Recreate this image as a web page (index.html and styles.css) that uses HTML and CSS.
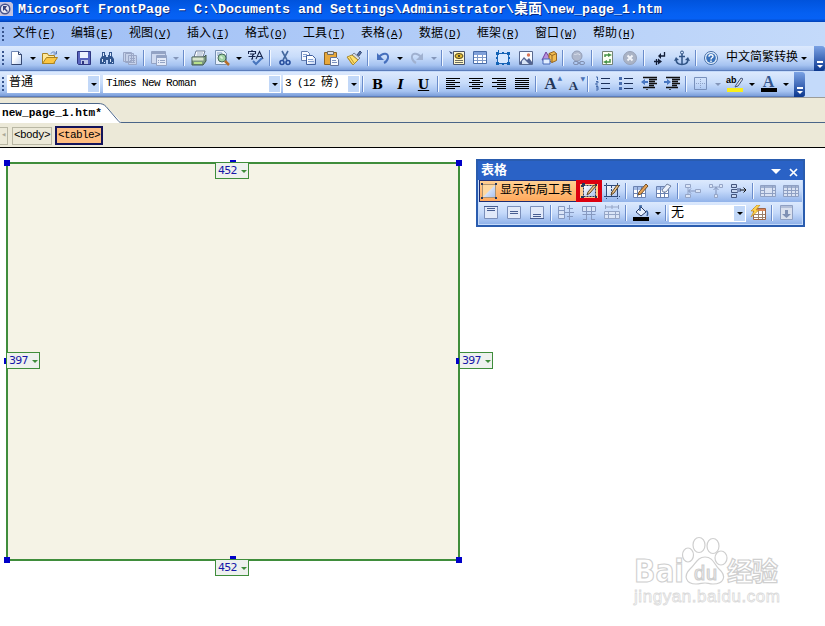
FILE: index.html
```html
<!DOCTYPE html>
<html lang="zh-CN">
<head>
    <meta charset="UTF-8">
    <title>Microsoft FrontPage</title>
    <link rel="stylesheet" href="styles.css">
</head>
<body>
    <svg class="sprite">
        <defs>
            <linearGradient id="paper" x2="1" y2="1"><stop offset=".4" stop-color="#fff"/><stop offset="1" stop-color="#b9cdf0"/></linearGradient>
            <linearGradient id="cell" y2="1" x2="1"><stop offset="0" stop-color="#fff"/><stop offset="1" stop-color="#a9c2ee"/></linearGradient>
        </defs>
        <symbol id="new" viewBox="0 0 16 16"><path d="M3.5 1.5h7l3 3v10h-10z" fill="url(#paper)" stroke="#7288b5"/><path d="M10.500 1.500v3h3M13.500 4.500v10h-10" fill="none" stroke="#34466f"/></symbol>
        <symbol id="open" viewBox="0 0 16 16"><path d="M.5 13.500v-10h5l1 2h6v8z" fill="#ffe89a" stroke="#a98222"/><path d="M.5 13.500l4-6h11l-4 6z" fill="#fbc643" stroke="#a98222"/><path d="M9 3.500c1-2 4-2 5 0M14.500 1v3h-3" fill="none" stroke="#5e7fb8"/></symbol>
        <symbol id="save" viewBox="0 0 16 16"><path d="M1.500 1.500h13v13h-12l-1-1z" fill="#5964bd" stroke="#2e3580"/><path d="M4 2h8v6H4z" fill="#eef3ff"/><path d="M5 10h7v4H5z" fill="#bcc6e8"/><path d="M6 11h2v3H6z" fill="#2e3580"/></symbol>
        <symbol id="find" viewBox="0 0 16 16"><path d="M3 2h3v3h1v2h2V5h1V2h3v4l2 3v5H9v-4H7v4H1V9l2-3z" fill="#31568f"/><path d="M4 3h1v3H4zM11 3h1v3h-1zM3 9h1v3H3zM11 9h1v3h-1zM5 12h1v1H5zM13 12h1v1h-1z" fill="#dce8fb"/></symbol>
        <symbol id="copies" viewBox="0 0 16 16"><path d="M1.500 2.500h8v9h-8zM3.500 3.500h8v9h-8zM6.500 5.500h8v9h-8z" fill="#c6d2ea" stroke="#9aa7c6"/><path d="M8 8.500h5M8 10.500h5M8 12.500h5" stroke="#9aa7c6"/></symbol>
        <symbol id="pane" viewBox="0 0 16 16"><path d="M.5 1.500h14v12H.5z" fill="#cfdaf0" stroke="#93a3c4"/><path d="M1 2h13v2H1z" fill="#93a3c4"/><path d="M5.500 5.500h10v10h-10z" fill="#e3eaf8" stroke="#93a3c4"/><path d="M6 6h9v2H6zM7 10h1v1H7zM7 12h1v1H7zM9 10h5v1H9zM9 12h5v1H9z" fill="#93a3c4"/></symbol>
        <symbol id="print" viewBox="0 0 16 16"><path d="M5 1h9l-2 6H3z" fill="#fff" stroke="#6d7d98"/><path d="M6 3h6M5.500 5h6" stroke="#95a9c7"/><path d="M1 7h12l2-2v6l-3 4H1z" fill="#7d9981" stroke="#42594a"/><path d="M1.500 7.500h11v3h-11z" fill="#dbe6cf"/><path d="M3 12h8v2H3z" fill="#b8e08b"/></symbol>
        <symbol id="preview" viewBox="0 0 16 16"><path d="M1.500.5h8l3 3v11h-11z" fill="#e8f1fb" stroke="#7892b4"/><path d="M3 3h5M3 5h4" stroke="#84a0c6"/><circle cx="8" cy="8" r="4" fill="#9fd2a5" stroke="#466858"/><path d="M6 7h2v2" fill="none" stroke="#efffed"/><path d="M11 11l4 4" stroke="#b66d27" stroke-width="2.500"/></symbol>
        <symbol id="spell" viewBox="0 0 16 16"><path d="M4 0v1.500M.5 4V1.500h7V4M2 4h4L4.500 5.500V9H3M.5 6.500h7M8 9L11.500 1.500 15 9M9 6.500h5" fill="none" stroke="#17254c" stroke-width="1.100"/><path d="M5 11l3 3 6-6" fill="none" stroke="#4775bd" stroke-width="2"/></symbol>
        <symbol id="cut" viewBox="0 0 16 16"><path d="M5 1l5 9M11 1L6 10" stroke="#45699f" stroke-width="1.600"/><circle cx="5" cy="12.500" r="2" fill="none" stroke="#284f9e" stroke-width="1.600"/><circle cx="11" cy="12.500" r="2" fill="none" stroke="#284f9e" stroke-width="1.600"/></symbol>
        <symbol id="copy" viewBox="0 0 16 16"><path d="M1.500 1.500h6l2 2v7h-8z" fill="#f7faff" stroke="#647eb0"/><path d="M6.500 5.500h6l3 3v6h-9z" fill="url(#paper)" stroke="#405f9e"/><path d="M3 4.500h4M3 6.500h3M8 9.500h5M8 11.500h6" stroke="#84a0d0"/></symbol>
        <symbol id="paste" viewBox="0 0 16 16"><path d="M1.500 2.500h12v12h-12z" fill="#e8a83b" stroke="#8b6428"/><path d="M4.500 1.500h6v3h-6z" fill="#d9dde6" stroke="#6d6c69"/><path d="M7.500 7.500h6l2 2v6h-8z" fill="#f7faff" stroke="#60739d"/><path d="M9 10.500h4M9 12.500h5" stroke="#7b91bf"/></symbol>
        <symbol id="brush" viewBox="0 0 16 16"><path d="M11 5l3-4 1.500 1.500L12 7z" fill="#5670a7" stroke="#34466f"/><path d="M8 3l6 5-2 2-6-5z" fill="#d5dbe4" stroke="#7b8495"/><path d="M6 5l6 5-5 5L1 7z" fill="#ffe06a" stroke="#a98931"/><path d="M4 7l4 6M2 8l4 6" stroke="#b99330"/></symbol>
        <symbol id="undo" viewBox="0 0 16 16"><path d="M4 7c4-5 10-4 9 1-.4 2-2 4-4 5" fill="none" stroke="#456fbd" stroke-width="2"/><path d="M2 3v7h7z" fill="#456fbd"/></symbol>
        <symbol id="redo" viewBox="0 0 16 16"><path d="M12 7C8 2 2 3 3 8c.4 2 2 4 4 5" fill="none" stroke="#a0b1d0" stroke-width="2"/><path d="M14 3v7H7z" fill="#a0b1d0"/></symbol>
        <symbol id="component" viewBox="0 0 16 16"><path d="M4.500 1.500h11v13h-11z" fill="#fff6c7" stroke="#48536c"/><path d="M6 10.500h8M6 12.500h8" stroke="#6c6d61"/><ellipse cx="10" cy="6" rx="4" ry="2.500" fill="#e4bd35" stroke="#554716"/><circle cx="10" cy="6" r="1" fill="#222"/><path d="M0 1l4 2-2 1z" fill="#263a6d"/></symbol>
        <symbol id="table" viewBox="0 0 16 16"><path d="M1.500 1.500h13v12h-13z" fill="#fff" stroke="#486ca8"/><path d="M2 2h12v3H2z" fill="#7fa0d9"/><path d="M2 7.500h12M2 10.500h12M5.500 5v8M10.500 5v8" stroke="#7f9ac8"/></symbol>
        <symbol id="layer" viewBox="0 0 16 16"><path d="M2.500 3.500h11v10h-11z" fill="#d7e8ff" stroke="#1f64b5"/><path d="M1 2h3v3H1zM12 2h3v3h-3zM1 12h3v3H1zM12 12h3v3h-3zM7 2h2v2H7zM7 13h2v2H7zM1 7h2v2H1zM13 7h2v2h-2zM3 0h1v3H3z" fill="#1263b6"/></symbol>
        <symbol id="image" viewBox="0 0 16 16"><path d="M1.500 1.500h13v13h-13z" fill="#f8fbff" stroke="#58698f"/><path d="M2 12l4-5 3 3 2-2 3 4v2H2z" fill="#526391"/><path d="M4 11l2-2 5 5H4z" fill="#d8e4f5"/><circle cx="10.500" cy="5" r="1.700" fill="#db7656"/></symbol>
        <symbol id="draw" viewBox="0 0 16 16"><path d="M5 2l5 8H1z" fill="#b88fdb" stroke="#7044a0"/><path d="M8 3.500l5-2 2.500 2v7l-4.500 2-3-2z" fill="#f3bd4f" stroke="#956521"/><path d="M2 9h7v5H2z" fill="#e2eeff" stroke="#4467b6"/><path d="M8 3.500l3 2 4.500-2M11 5.500v7" stroke="#956521" fill="none"/></symbol>
        <symbol id="link" viewBox="0 0 16 16"><circle cx="7" cy="6" r="5" fill="#b0b9cd" stroke="#929db6"/><path d="M4 4c2 2 3-2 6 1" stroke="#dce2ee" fill="none"/><rect x="3.500" y="11.500" width="5" height="3" rx="1.500" fill="none" stroke="#8190b1"/><rect x="9.500" y="11.500" width="5" height="3" rx="1.500" fill="none" stroke="#8190b1"/><path d="M7 13h4" stroke="#8190b1"/></symbol>
        <symbol id="refresh" viewBox="0 0 16 16"><path d="M3.500 1.500h10v13h-10z" fill="#fbfff2" stroke="#748276"/><path d="M6 7V5h5M11 9v3H6" fill="none" stroke="#469447" stroke-width="1.500"/><path d="M9 3l4 2-4 2zM8 10l-4 2 4 2z" fill="#469447"/></symbol>
        <symbol id="stop" viewBox="0 0 16 16"><circle cx="8" cy="8" r="6.500" fill="#aab3c5" stroke="#98a2b8"/><path d="M5.500 5.500l5 5M10.500 5.500l-5 5" stroke="#f1f4f9" stroke-width="2"/></symbol>
        <symbol id="marks" viewBox="0 0 16 16"><path d="M13.500 2v4H9M3 11.500h5M5.500 9v6" fill="none" stroke="#111c36" stroke-width="1.300"/><path d="M10 3v6L7 6zM7 8.500v6l4-3z" fill="#111c36"/></symbol>
        <symbol id="anchor" viewBox="0 0 16 16"><circle cx="8" cy="2.500" r="1.500" fill="none" stroke="#315486"/><path d="M8 4v10M5 6.500h6M2 9c0 4 3 5.500 6 5.500s6-1.500 6-5.500" fill="none" stroke="#315486" stroke-width="1.500"/><path d="M0 11l2-4 3 3zM16 11l-2-4-3 3z" fill="#315486"/></symbol>
        <symbol id="help" viewBox="0 0 16 16"><circle cx="8" cy="8" r="6.500" fill="#e9f3ff" stroke="#456da5"/><circle cx="8" cy="8" r="4.800" fill="#3972bb"/><path d="M6 6.700c0-2.600 4-2.600 4-.3 0 1.500-2 1.300-2 3M8 10.500V12" fill="none" stroke="#fff" stroke-width="1.400"/></symbol>
        <symbol id="left" viewBox="0 0 16 16"><path d="M1 2.500h14M1 4.500h9M1 6.500h14M1 8.500h9M1 10.500h14M1 12.500h9" stroke="#000"/></symbol>
        <symbol id="center" viewBox="0 0 16 16"><path d="M1 2.500h14M4 4.500h8M1 6.500h14M4 8.500h8M1 10.500h14M4 12.500h8" stroke="#000"/></symbol>
        <symbol id="right" viewBox="0 0 16 16"><path d="M1 2.500h14M6 4.500h9M1 6.500h14M6 8.500h9M1 10.500h14M6 12.500h9" stroke="#000"/></symbol>
        <symbol id="justify" viewBox="0 0 16 16"><path d="M1 2.500h14M1 4.500h14M1 6.500h14M1 8.500h14M1 10.500h14M1 12.500h14" stroke="#000"/></symbol>
        <symbol id="numbers" viewBox="0 0 16 16"><path d="M6 2.500h9M6 7.500h9M6 12.500h9" stroke="#1b2f58"/><path d="M1 1h1.500v3M1 5.500h2v1.500H1v2h2M1 10.500h2v3.500H1M1 12h2" fill="none" stroke="#456bab"/></symbol>
        <symbol id="bullets" viewBox="0 0 16 16"><path d="M6 2.500h9M6 7.500h9M6 12.500h9" stroke="#1b2f58"/><path d="M1 1h3v3H1zM1 6h3v3H1zM1 11h3v3H1z" fill="#486daf"/></symbol>
        <symbol id="outdent" viewBox="0 0 16 16"><path d="M2 1.500h14M8 3.500h8M8 5.500h6M8 7.500h8M8 9.500h5M2 11.500h12M6 13v1" stroke="#111" stroke-width="1.300"/><path d="M0 6l4-3v2h3v2H4v2z" fill="#4776c1"/></symbol>
        <symbol id="indent" viewBox="0 0 16 16"><path d="M2 1.500h14M8 3.500h8M8 5.500h6M8 7.500h8M8 9.500h5M2 11.500h12M6 13v1" stroke="#111" stroke-width="1.300"/><path d="M7 6L3 3v2H0v2h3v2z" fill="#4776c1"/></symbol>
        <symbol id="border" viewBox="0 0 16 16"><path d="M1.500 1.500h12v12h-12z" fill="none" stroke="#7890bb"/><path d="M7.500 3v10M3 7.500h10" stroke="#8da1c6" stroke-dasharray="1 1"/></symbol>
        <symbol id="marker" viewBox="0 0 16 16"><path d="M0 12h16v4H0z" fill="#f9ef1b"/><path d="M9 9l5-7 2 1-5 7-3 1z" fill="#d8dde5" stroke="#44557c"/></symbol>
        <symbol id="mini" viewBox="0 0 16 16"><path d="M1 1h14v14H1z" fill="#ffd9a0"/><path d="M2 14L14 2v12z" fill="url(#cell)"/><path d="M1.500 1.500h13v13h-13z" fill="none" stroke="#5a4c44" stroke-dasharray="1 1"/><path d="M0 0h2v2H0zM14 0h2v2h-2zM0 14h2v2H0zM14 14h2v2h-2z" fill="#26385c"/></symbol>
        <symbol id="drawtable" viewBox="0 0 16 16"><path d="M2.500 2.500h12v11h-12z" fill="url(#cell)" stroke="#26385c" stroke-dasharray="2 1"/><path d="M0 2h3v2H0zM1 0h3v3H1zM0 13h3v2H0zM14 13h2v2h-2zM14 1h2v2h-2z" fill="#26385c"/><path d="M7 9l6-7 2 1-6 7-3 2z" fill="#efc58b" stroke="#604925"/></symbol>
        <symbol id="drawcell" viewBox="0 0 16 16"><path d="M2.500 2.500h11v11h-11z" fill="url(#cell)" stroke="#304b7b"/><path d="M0 2.500h16M0 13.500h16M2.500 0v16M13.500 0v16M7.500 3v10" stroke="#304b7b" stroke-dasharray="2 1"/><path d="M8 9l5-7 2 1-5 7-3 2z" fill="#efc58b" stroke="#604925"/></symbol>
        <symbol id="pencil" viewBox="0 0 16 16"><path d="M.5 3.500h12v11H.5z" fill="#fff" stroke="#6b82b1"/><path d="M1 4h11v3H1z" fill="#a5bde8"/><path d="M1 10.500h11M4.500 4v10M8.500 4v10" stroke="#6b82b1"/><path d="M6 9l7-8 2 2-7 8-3 1z" fill="#e6a258" stroke="#725025"/></symbol>
        <symbol id="eraser" viewBox="0 0 16 16"><path d="M.5 3.500h12v11H.5z" fill="#fff" stroke="#6b82b1"/><path d="M1 4h11v3H1z" fill="#a5bde8"/><path d="M1 10.500h11M4.500 4v10M8.500 4v10" stroke="#6b82b1"/><path d="M6 7l5-6 4 2-5 6H7z" fill="#eaf0fb" stroke="#71809d"/></symbol>
        <symbol id="insrow" viewBox="0 0 16 16"><path d="M.5 1.500h5v3h-5zM.5 11.500h5v3h-5zM10.500 6.500h5v3h-5zM3 4v7" fill="#dbe5f7" stroke="#95a5c6"/><path d="M4 8h6M6 5.500L3.500 8 6 10.500" fill="none" stroke="#8193ba"/></symbol>
        <symbol id="inscol" viewBox="0 0 16 16"><path d="M1.500 1.500h3v3h-3zM11.500 1.500h3v3h-3zM6.500 11.500h3v3h-3zM4 4h7" fill="#dbe5f7" stroke="#95a5c6"/><path d="M8 4v7M5.500 7L8 4.500 10.500 7" fill="none" stroke="#8193ba"/></symbol>
        <symbol id="delcell" viewBox="0 0 16 16"><path d="M.5 1.500h5v3h-5zM.5 6.500h6v3h-6zM.5 11.500h5v3h-5z" fill="#c9d7f0" stroke="#44557d"/><path d="M6 5h4v4H6z" fill="#7e91ba"/><path d="M9 7h6M12.500 4.500L15 7l-2.500 2.500" fill="none" stroke="#111"/></symbol>
        <symbol id="merge" viewBox="0 0 16 16"><path d="M.5 2.500h15v11H.5z" fill="#d9e2f3" stroke="#8fa0c3"/><path d="M1 3h14v2H1z" fill="#9fb0d0"/><path d="M4.500 3v10M12.500 3v10M1 7.500h3M13 7.500h2M1 10.500h14" stroke="#8fa0c3"/></symbol>
        <symbol id="split" viewBox="0 0 16 16"><path d="M.5 2.500h15v11H.5z" fill="#d9e2f3" stroke="#8fa0c3"/><path d="M1 3h14v2H1z" fill="#9fb0d0"/><path d="M4.500 3v10M8.500 3v10M12.500 3v10M1 7.500h14M1 10.500h14" stroke="#8fa0c3"/></symbol>
        <symbol id="top" viewBox="0 0 16 16"><path d="M1.500 1.500h13v12h-13z" fill="#e1e9f9" stroke="#7b8fba"/><path d="M1 1.500h14M4 3.500h8M4 5.500h8" stroke="#475d91"/></symbol>
        <symbol id="middle" viewBox="0 0 16 16"><path d="M1.500 1.500h13v12h-13z" fill="#e1e9f9" stroke="#7b8fba"/><path d="M4 6.500h8M4 8.500h8" stroke="#475d91"/></symbol>
        <symbol id="bottom" viewBox="0 0 16 16"><path d="M1.500 1.500h13v12h-13z" fill="#e1e9f9" stroke="#7b8fba"/><path d="M4 9.500h8M4 11.500h8M1 13.500h14" stroke="#475d91"/></symbol>
        <symbol id="rows" viewBox="0 0 16 16"><path d="M.5 1.500h6v12h-6zM1 5.500h5M1 9.500h5M9 3.500h6M9 11.500h6M11.500 0v15M6 7.500h10" fill="#dbe5f7" stroke="#8699c0"/></symbol>
        <symbol id="cols" viewBox="0 0 16 16"><path d="M1.500 1.500h13v5h-13zM1.500 9.500h13M5.500 1v14M10.500 1v14M2 14.500h3M11 14.500h3" fill="#dbe5f7" stroke="#8699c0"/></symbol>
        <symbol id="autofit" viewBox="0 0 16 16"><path d="M.5 6.500h15v7H.5zM1 9.500h14M4.500 6v7M11.500 6v7M1.500 0v4M8 0v4M14.500 0v4M2 2h12" fill="#dbe5f7" stroke="#95a5c6"/></symbol>
        <symbol id="fill" viewBox="0 0 16 16"><path d="M0 12h16v4H0z" fill="#000"/><path d="M3 7l5-5 5 5-5 4z" fill="#eaf2ff" stroke="#2a3c66"/><path d="M7 6V1h2M13 6c2 0 2 3 1 5" fill="none" stroke="#365f9c" stroke-width="1.500"/></symbol>
        <symbol id="format" viewBox="0 0 16 16"><path d="M3.500 3.500h12v11h-12z" fill="#fff" stroke="#9c6446"/><path d="M4 4h11v2H4z" fill="#dc8559"/><path d="M4 9.500h11M4 12.500h11M8.500 6v8M12.500 6v8" stroke="#9c806e"/><path d="M7 0L1 6h3l-3 6 8-7H6l4-5z" fill="#ffd34e" stroke="#b98217" stroke-width=".6"/></symbol>
        <symbol id="down" viewBox="0 0 16 16"><path d="M1.500.500h12v14h-12z" fill="#d9e0ee" stroke="#8fa0c3"/><path d="M2 1h11v2H2z" fill="#b3bfd8"/><path d="M6 5h3v4h3l-4.500 4L3 9h3z" fill="#7f90b4"/></symbol>
    </svg>

    <div class="title-bar">
        <svg class="app-icon" viewBox="0 0 13 16"><path d="M0 1h11l2 2v12H0z" fill="#c5c4df"/><circle cx="5" cy="8" r="5.500" fill="#47548c"/><circle cx="5" cy="8" r="4" fill="#e9e8f3"/><path d="M3 5v5l1.500-1.500L7 11l1-1-2.500-2.500L7 5z" fill="#35427f"/></svg>
        <span>Microsoft FrontPage – C:\Documents and Settings\Administrator\<b>桌面</b>\new_page_1.htm</span>
    </div>

    <div class="menu-bar">
        <i class="grip"></i>
        <span>文件<em>(<u>F</u>)</em></span>
        <span>编辑<em>(<u>E</u>)</em></span>
        <span>视图<em>(<u>V</u>)</em></span>
        <span>插入<em>(<u>I</u>)</em></span>
        <span>格式<em>(<u>O</u>)</em></span>
        <span>工具<em>(<u>T</u>)</em></span>
        <span>表格<em>(<u>A</u>)</em></span>
        <span>数据<em>(<u>D</u>)</em></span>
        <span>框架<em>(<u>R</u>)</em></span>
        <span>窗口<em>(<u>W</u>)</em></span>
        <span>帮助<em>(<u>H</u>)</em></span>
    </div>

    <div class="toolbar standard">
        <i class="grip"></i>
        <svg class="icon"><use href="#new"/></svg><i class="drop"></i>
        <svg class="icon"><use href="#open"/></svg><i class="drop"></i>
        <svg class="icon"><use href="#save"/></svg>
        <svg class="icon"><use href="#find"/></svg>
        <svg class="icon"><use href="#copies"/></svg>
        <i class="sep"></i>
        <svg class="icon"><use href="#pane"/></svg><i class="drop off"></i>
        <i class="sep"></i>
        <svg class="icon"><use href="#print"/></svg>
        <svg class="icon"><use href="#preview"/></svg><i class="drop"></i>
        <svg class="icon"><use href="#spell"/></svg>
        <i class="sep"></i>
        <svg class="icon"><use href="#cut"/></svg>
        <svg class="icon"><use href="#copy"/></svg>
        <svg class="icon"><use href="#paste"/></svg>
        <svg class="icon"><use href="#brush"/></svg>
        <i class="sep"></i>
        <svg class="icon"><use href="#undo"/></svg><i class="drop"></i>
        <svg class="icon"><use href="#redo"/></svg><i class="drop off"></i>
        <i class="sep"></i>
        <svg class="icon"><use href="#component"/></svg>
        <svg class="icon"><use href="#table"/></svg>
        <svg class="icon"><use href="#layer"/></svg>
        <svg class="icon"><use href="#image"/></svg>
        <svg class="icon"><use href="#draw"/></svg>
        <i class="sep"></i>
        <svg class="icon"><use href="#link"/></svg>
        <i class="sep"></i>
        <svg class="icon"><use href="#refresh"/></svg>
        <svg class="icon"><use href="#stop"/></svg>
        <i class="sep"></i>
        <svg class="icon"><use href="#marks"/></svg>
        <svg class="icon"><use href="#anchor"/></svg>
        <i class="sep"></i>
        <svg class="icon"><use href="#help"/></svg>
        <span class="convert">中文简繁转换</span><i class="drop"></i>
        <i class="cap"></i>
    </div>

    <div class="format-row">
        <div class="toolbar formatting">
            <i class="grip"></i>
            <div class="combo style"><span>普通</span><i class="drop"></i></div>
            <div class="combo font"><span>Times New Roman</span><i class="drop"></i></div>
            <div class="combo size"><span>3 (12 <b>磅</b>)</span><i class="drop"></i></div>
            <i class="sep"></i>
            <span class="letter bold">B</span>
            <span class="letter italic">I</span>
            <span class="letter under">U</span>
            <i class="sep"></i>
            <svg class="icon"><use href="#left"/></svg>
            <svg class="icon"><use href="#center"/></svg>
            <svg class="icon"><use href="#right"/></svg>
            <svg class="icon"><use href="#justify"/></svg>
            <i class="sep"></i>
            <span class="letter grow">A<small>▲</small></span>
            <span class="letter shrink">A<small>▼</small></span>
            <i class="sep"></i>
            <svg class="icon"><use href="#numbers"/></svg>
            <svg class="icon"><use href="#bullets"/></svg>
            <svg class="icon"><use href="#outdent"/></svg>
            <svg class="icon"><use href="#indent"/></svg>
            <i class="sep"></i>
            <svg class="icon"><use href="#border"/></svg><i class="drop off"></i>
            <span class="letter mark"><svg class="icon"><use href="#marker"/></svg><small>ab</small></span><i class="drop"></i>
            <span class="letter color">A</span><i class="drop"></i>
            <i class="cap"></i>
        </div>
    </div>

    <div class="tab-strip">
        <svg class="tab-shape" viewBox="0 0 825 26"><path d="M0 5.500h98c4 0 6 1 8 3l15 15V26H0z" fill="#fff"/><path d="M0 5.500h98c4 0 6 1 8 3l12 14c1 1.500 2 2 4 2h703" fill="none" stroke="#4a6588"/><path d="M0 25h825v1H0z" fill="#ece9d8"/></svg>
        <span>new_page_1.htm*</span>
    </div>

    <div class="tag-bar">
        <span class="tag back">◂</span>
        <span class="tag">&lt;body&gt;</span>
        <span class="tag current">&lt;table&gt;</span>
    </div>

    <div class="page">
        <div class="layout-table">
            <i class="handle nw"></i><i class="handle ne"></i><i class="handle sw"></i><i class="handle se"></i>
            <i class="handle n"></i><i class="handle s"></i><i class="handle w"></i><i class="handle e"></i>
            <span class="measure m-top">452<i></i></span>
            <span class="measure m-left">397<i></i></span>
            <span class="measure m-right">397<i></i></span>
            <span class="measure m-bottom">452<i></i></span>
        </div>

        <div class="palette">
            <div class="palette-title"><span>表格</span><i></i><svg viewBox="0 0 9 9"><path d="M1 1l7 7M8 1L1 8" stroke="#fff" stroke-width="1.700"/></svg></div>
            <div class="palette-row">
                <span class="toggle"><svg class="icon"><use href="#mini"/></svg>显示布局工具</span>
                <span class="marked"><svg class="icon"><use href="#drawtable"/></svg></span>
                <svg class="icon"><use href="#drawcell"/></svg>
                <i class="sep"></i>
                <svg class="icon"><use href="#pencil"/></svg>
                <svg class="icon"><use href="#eraser"/></svg>
                <i class="sep"></i>
                <svg class="icon"><use href="#insrow"/></svg>
                <svg class="icon"><use href="#inscol"/></svg>
                <svg class="icon"><use href="#delcell"/></svg>
                <i class="sep"></i>
                <svg class="icon"><use href="#merge"/></svg>
                <svg class="icon"><use href="#split"/></svg>
            </div>
            <div class="palette-row">
                <svg class="icon"><use href="#top"/></svg>
                <svg class="icon"><use href="#middle"/></svg>
                <svg class="icon"><use href="#bottom"/></svg>
                <i class="sep"></i>
                <svg class="icon"><use href="#rows"/></svg>
                <svg class="icon"><use href="#cols"/></svg>
                <svg class="icon"><use href="#autofit"/></svg>
                <i class="sep"></i>
                <svg class="icon"><use href="#fill"/></svg><i class="drop"></i>
                <i class="sep"></i>
                <div class="combo preset"><span>无</span><i class="drop"></i></div>
                <svg class="icon"><use href="#format"/></svg>
                <i class="sep"></i>
                <svg class="icon"><use href="#down"/></svg>
            </div>
        </div>

        <svg class="watermark" viewBox="0 0 160 80">
            <g fill="#fff" stroke="#cfcfcf" stroke-width="1.200">
                <text class="wm-logo" x="2" y="47" textLength="50" lengthAdjust="spacingAndGlyphs">Bai</text>
                <ellipse cx="56" cy="20" rx="5.500" ry="7"/>
                <ellipse cx="67" cy="10" rx="6" ry="7.500"/>
                <ellipse cx="81" cy="11" rx="6" ry="7.500"/>
                <ellipse cx="89" cy="23" rx="6" ry="7"/>
                <path d="M73 22c8 0 9 7 14 12 8 7 5 15-6 15-4 0-5-1-8-1s-5 1-9 1c-10 0-13-8-6-15 6-5 7-12 15-12z"/>
                <text class="wm-du" x="62" y="45" textLength="23">du</text>
                <text class="wm-cn" x="95" y="46" textLength="51">经验</text>
            </g>
            <text class="wm-url" x="2" y="67" textLength="146">jingyan.baidu.com</text>
        </svg>
    </div>
</body>
</html>
```

FILE: styles.css
```css
body {
    margin: 0;
    width: 825px;
    height: 626px;
    overflow: hidden;
    background: #fff;
    color: #000;
    font-family: "Liberation Mono", "Noto Sans CJK SC", monospace;
    font-size: 12px;
    line-height: 1;
}
i, em {
    font-style: normal;
}
b {
    font-weight: inherit;
}
svg {
    flex: none;
}
.sprite {
    position: absolute;
    width: 0;
    height: 0;
}
.title-bar {
    display: flex;
    align-items: center;
    box-sizing: border-box;
    height: 22px;
    padding-bottom: 4px;
    background: linear-gradient(#0053dc, #0560f2 60%, #0661f5 85%, #0040b5);
    color: #fff;
    font-size: 13.33px;
    font-weight: bold;
    white-space: nowrap;
    text-shadow: 1px 1px #0a2a80;
}
.title-bar b {
    font-size: 14px;
}
.app-icon {
    width: 13px;
    height: 16px;
    margin-right: 5px;
}
.menu-bar {
    display: flex;
    align-items: center;
    height: 24px;
    background: linear-gradient(90deg, #9ebef5, #c4dafa);
}
.menu-bar span {
    display: flex;
    align-items: center;
    width: 42px;
    height: 18px;
    margin-right: 16px;
    white-space: nowrap;
}
.menu-bar em {
    font-size: 11px;
    letter-spacing: -0.6px;
}
.menu-bar .grip {
    margin-right: 9px;
}
.grip {
    flex: none;
    width: 2px;
    height: 14px;
    margin: 0 1px 0 2px;
    background: repeating-linear-gradient(#38558e 0 2px, transparent 2px 4px);
}
.toolbar {
    display: flex;
    align-items: center;
    height: 25px;
    box-sizing: border-box;
    background: linear-gradient(#dce9fd, #c8dcfa 45%, #a6c3f1 80%, #7a9dd9);
    border-bottom: 1px solid #5c7dbb;
}
.standard .grip {
    margin-right: 0;
}
.icon {
    width: 16px;
    height: 16px;
    margin: 0 3.5px;
}
.drop {
    flex: none;
    display: flex;
    justify-content: center;
    width: 11px;
}
.drop::after {
    content: "";
    border: 3px solid transparent;
    border-top-color: #000;
    border-bottom: 0;
}
.drop.off::after {
    border-top-color: #8496b9;
}
.sep {
    flex: none;
    width: 1px;
    height: 16px;
    margin: 0 2px;
    background: #6a8ccb;
    border-right: 1px solid #f1f7ff;
}
.convert {
    width: 72px;
    margin-left: 4px;
    white-space: nowrap;
}
.cap {
    flex: none;
    display: flex;
    flex-direction: column;
    align-items: center;
    justify-content: flex-end;
    box-sizing: border-box;
    width: 11px;
    height: 25px;
    margin-left: auto;
    padding-bottom: 3px;
    background: linear-gradient(#7ba2e4, #3862b2 60%, #0a368d);
    border-radius: 0 3px 3px 0;
}
.cap::before {
    content: "";
    width: 6px;
    height: 2px;
    margin-bottom: 2px;
    background: #fff;
}
.cap::after {
    content: "";
    border: 3px solid transparent;
    border-top-color: #fff;
    border-bottom: 0;
}
.format-row {
    height: 27px;
    padding-top: 1px;
    box-sizing: border-box;
    background: #c4dafa;
    border-bottom: 1px solid #9c9c98;
}
.formatting {
    width: 805px;
    border-radius: 0 3px 3px 0;
}
.formatting .grip {
    margin-right: 3px;
}
.combo {
    flex: none;
    display: flex;
    justify-content: space-between;
    height: 18px;
    background: #fff;
    white-space: pre;
}
.combo span {
    padding: 1px 0 0 2px;
    font-size: 11px;
    letter-spacing: -0.6px;
    line-height: 14px;
}
.combo .drop {
    width: 13px;
    align-items: center;
    background: #c2d8f8;
    border: 1px solid #fff;
    box-sizing: border-box;
}
.style {
    width: 93px;
    margin-right: 3px;
}
.style span, .combo b, .preset span {
    font-size: 12px;
    letter-spacing: 0;
}
.font {
    width: 178px;
    margin-right: 2px;
}
.size {
    width: 77px;
}
.font span {
    padding-left: 3px;
}
.letter {
    position: relative;
    flex: none;
    width: 23px;
    text-align: center;
    font: bold 13px "DejaVu Serif", "Liberation Serif", serif;
}
.italic {
    font-style: italic;
}
.under {
    text-decoration: underline;
}
.grow {
    color: #243759;
    font: bold 17px "Liberation Serif", serif;
}
.shrink {
    color: #243759;
    font: bold 13px "Liberation Serif", serif;
    padding-top: 3px;
}
.grow small, .shrink small {
    position: absolute;
    top: 0;
    right: 0;
    color: #4b72b6;
    font: 6px "DejaVu Sans", sans-serif;
}
.mark {
    height: 16px;
}
.mark .icon {
    display: block;
}
.mark small {
    position: absolute;
    left: 3px;
    top: -1px;
    font: bold 9px "Liberation Sans", sans-serif;
}
.color {
    height: 16px;
    color: #34568e;
    font: bold 16px "Liberation Serif", serif;
    line-height: 12px;
}
.color::after {
    content: "";
    display: block;
    width: 16px;
    height: 4px;
    margin: 0 auto;
    background: #000;
}
.tab-strip {
    position: relative;
    height: 26px;
    background: #ece9d8;
}
.tab-shape {
    display: block;
    width: 825px;
    height: 26px;
}
.tab-strip span {
    position: absolute;
    left: 2px;
    top: 10px;
    font-size: 11.1px;
    font-weight: bold;
}
.tag-bar {
    display: flex;
    align-items: center;
    height: 24px;
    box-sizing: border-box;
    background: #ece9d8;
    border-bottom: 1px solid #000;
}
.tag {
    box-sizing: border-box;
    width: 40px;
    height: 18px;
    margin-right: 3px;
    border: 1px solid #b9b7a4;
    text-align: center;
    font-size: 11px;
    line-height: 15px;
    letter-spacing: -0.6px;
}
.tag.back {
    width: 8px;
    margin-right: 4px;
    border-left: 0;
    color: #aaa896;
    font-size: 9px;
}
.tag.current {
    width: 48px;
    height: 19px;
    background: #ffbd80;
    border: 2px solid #14145a;
}
.page {
    position: relative;
    height: 478px;
    background: #fff;
}
.layout-table {
    position: absolute;
    left: 6px;
    top: 14px;
    width: 450px;
    height: 395px;
    background: #f5f3e6;
    border: 2px solid #3f8d3b;
}
.handle {
    position: absolute;
    width: 6px;
    height: 6px;
    background: #0000c8;
}
.nw { left: -4px; top: -4px; }
.ne { right: -4px; top: -4px; }
.sw { left: -4px; bottom: -4px; }
.se { right: -4px; bottom: -4px; }
.n { left: 222px; top: -4px; height: 3px; }
.s { left: 222px; bottom: 0; height: 3px; }
.w { left: -4px; top: 194px; width: 3px; }
.e { right: -1px; top: 194px; width: 3px; }
.measure {
    position: absolute;
    display: flex;
    align-items: center;
    box-sizing: border-box;
    width: 34px;
    height: 17px;
    padding-left: 2px;
    background: #eef1ee;
    border: 1px solid #3f8d3b;
    color: #1818a8;
    font: 11px "DejaVu Sans", sans-serif;
    letter-spacing: -0.7px;
}
.measure i {
    margin: 2px 0 0 4px;
    border: 3px solid transparent;
    border-top-color: #3f8d3b;
    border-bottom: 0;
}
.m-top { left: 207px; top: -2px; }
.m-left { left: -2px; top: 188px; }
.m-right { left: 451px; top: 188px; }
.m-bottom { left: 207px; top: 395px; }
.palette {
    position: absolute;
    left: 476px;
    top: 11px;
    width: 329px;
    height: 68px;
    box-sizing: border-box;
    padding: 1px;
    background: #c4dafa;
    border: 2px solid #2a5cae;
}
.palette-title {
    display: flex;
    align-items: center;
    height: 19px;
    margin: -1px -1px 0;
    padding: 0 5px 0 3px;
    background: #2a62c6;
    color: #fff;
    font-weight: bold;
    font-size: 13px;
}
.palette-title i {
    margin: 2px 8px 0 auto;
    border: 5px solid transparent;
    border-top-color: #fff;
    border-bottom: 0;
}
.palette-title svg {
    width: 9px;
    height: 9px;
    margin-top: 3px;
}
.palette-row {
    display: flex;
    align-items: center;
    box-sizing: border-box;
    height: 22px;
    background: linear-gradient(#dce9fd, #c4d9fa 50%, #91b2e9);
}
.toggle {
    display: flex;
    align-items: center;
    box-sizing: border-box;
    width: 98px;
    height: 22px;
    background: linear-gradient(#ffcf92, #ffa95d);
    border: 1px solid #1c2c72;
    white-space: nowrap;
}
.toggle .icon {
    margin: 0 3px 0 1px;
}
.marked {
    display: flex;
    align-items: center;
    justify-content: center;
    box-sizing: border-box;
    width: 26px;
    height: 22px;
    margin: 0 -2px 0 -1px;
    border: 4px solid #dc0010;
    background: #ffca8b;
    z-index: 1;
}
.marked .icon {
    margin: 0;
}
.preset {
    width: 77px;
    height: 17px;
}
.preset span {
    font-size: 13px;
}
.watermark {
    position: absolute;
    left: 632px;
    top: 387px;
    width: 160px;
    height: 80px;
}
.wm-logo {
    font: bold 32px "DejaVu Sans", sans-serif;
}
.wm-du {
    font: 20px "Liberation Sans", sans-serif;
}
.wm-cn {
    font: bold 26px "Noto Sans CJK SC", sans-serif;
}
.wm-url {
    font: 17px "Liberation Sans", sans-serif;
    fill: #fff;
    stroke: #dadada;
    stroke-width: 0.8px;
}
```
